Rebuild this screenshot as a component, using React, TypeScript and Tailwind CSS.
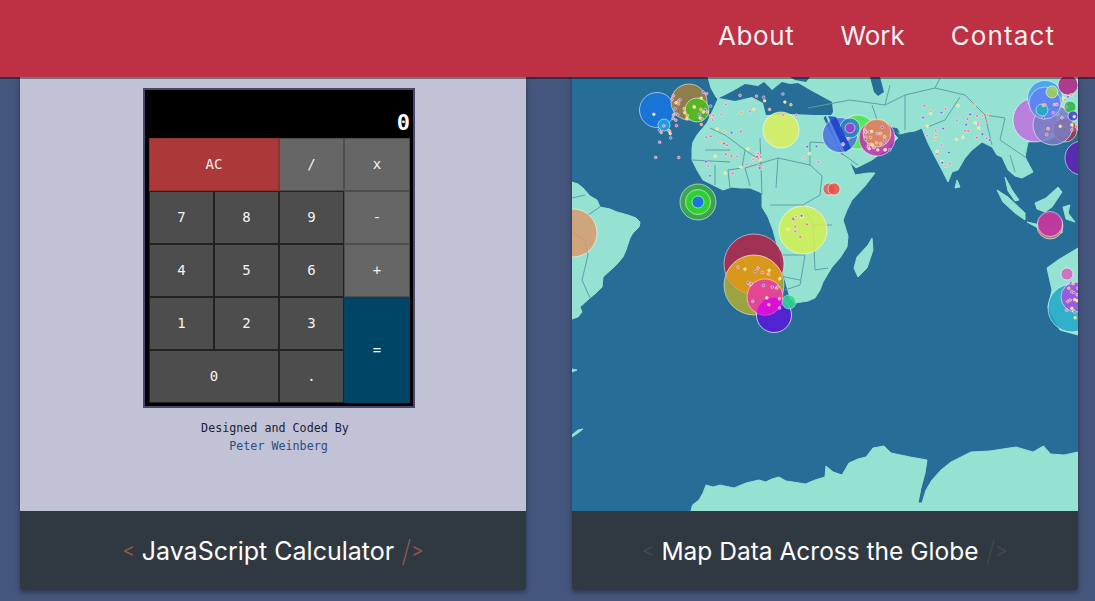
import React, { FC } from 'react';

const LAND = '#95e2d2';
const SEA = '#266d98';
const LINE = '#5f9fa8';

type Spot = [number, number, number, string];

// bubbles below the clip group, roughly west to east
const spots: Spot[] = [
  [573, 233, 24, '#d99a6c'],
  [657, 110, 17.5, '#1676e0'],
  [689, 102, 18, '#a47f3e'],
  [697, 110, 12, '#4cc01c'],
  [664, 125, 6, '#1ea4e4'],
  [781, 130, 18, '#dcee5c'],
  [698, 202, 18, '#3fb23f'],
  [698, 202, 12.5, '#2ed82e'],
  [698, 202, 6, '#1668f2'],
  [803, 230, 24, '#d2ee50'],
  [858, 132, 17, '#4ee64e'],
  [840, 135, 17.5, '#4a6ee4'],
  [850, 128, 10, '#2a7fbe'],
  [850, 128, 5, '#a63cd2'],
  [877, 138, 18, '#c22eae'],
  [877, 133, 14, '#dc9058'],
  [829, 189, 6, '#e05a50'],
  [834, 189, 6, '#ea4f44'],
  [1035, 120, 22, '#c06ee0'],
  [1065, 130, 12, '#a03c50'],
  [1053, 125, 20, '#7a7cc4'],
  [1045, 98, 17.5, '#3e9ef2'],
  [1045, 103, 16, '#6080f2'],
  [1052, 92, 6, '#a2d25c'],
  [1042, 110, 6, '#1eb0c0'],
  [1070, 107, 6, '#2eb43e'],
  [1073, 116, 5, '#3e3ec4'],
  [1068, 85, 10, '#b01e80'],
  [1082, 158, 17, '#6420b4'],
  [1050, 226, 13, '#c08060'],
  [1050, 224, 12.5, '#c02ea4'],
  [1067, 274, 6, '#d860c0'],
  [1072, 308, 24, '#1ea8c8'],
  [1076, 297, 15, '#a650e2'],
];

// small specks: [centre x, centre y, spread x, spread y, how many]
const clusters: [number, number, number, number, number][] = [
  [730, 130, 30, 30, 26],
  [690, 105, 18, 18, 26],
  [665, 135, 14, 25, 12],
  [735, 165, 30, 12, 16],
  [770, 105, 30, 12, 12],
  [955, 125, 35, 20, 34],
  [945, 160, 8, 18, 8],
  [877, 138, 14, 12, 26],
  [800, 230, 14, 16, 10],
  [758, 290, 22, 24, 20],
  [1060, 110, 18, 25, 20],
  [1072, 300, 6, 18, 16],
  [825, 150, 25, 15, 8],
];

const speckColors = ['#f06a8c', '#f2e25c', '#7a6ae0', '#e878c8', '#f0a060'];

const specks = clusters.flatMap(([cx, cy, sx, sy, n], i) =>
  Array.from({ length: n }, (_, k) => {
    const a = Math.sin((i + 1) * 91.7 + k * 12.9898) * 43758.5453;
    const b = Math.sin((i + 1) * 37.3 + k * 78.233) * 24634.6345;
    return {
      x: cx + ((a - Math.floor(a)) * 2 - 1) * sx,
      y: cy + ((b - Math.floor(b)) * 2 - 1) * sy,
      fill: speckColors[(i + k) % speckColors.length],
    };
  }),
);

const WorldMap: FC = () => (
  <svg viewBox="572 77 506 434" className="block h-full w-full blur-[0.35px]" style={{ background: SEA }}>
    <defs>
      <clipPath id="maroon">
        <circle cx={754} cy={264} r={30} />
      </clipPath>
      <clipPath id="pinkdisc">
        <circle cx={765} cy={297} r={18} />
      </clipPath>
    </defs>
    <g fill={LAND} stroke={LAND} strokeWidth={1} strokeLinejoin="round">
      {/* south america */}
      <path d="M572 182 L578 184 L583 188 L590 196 L597 200 L600 207 L610 209 L617 212 L628 215 L636 218 L640 222 L639 227 L633 233 L630 238 L626 250 L623 257 L618 263 L613 268 L603 277 L602 287 L596 293 L590 298 L580 307 L582 312 L578 317 L572 319 Z" />
      {/* africa and eurasia */}
      <path d="M708 77 L711 88 L716 97 L718 99 L713 110 L707 123 L701 130 L697 135 L693 142 L692 148 L692 160 L697 170 L703 180 L713 185 L723 190 L732 187 L740 188 L750 188 L762 193 L762 207 L768 217 L773 230 L777 245 L780 257 L783 273 L787 287 L790 298 L795 303 L808 301 L815 298 L820 290 L823 282 L832 267 L840 258 L847 247 L848 236 L843 220 L847 210 L852 200 L865 186 L875 173 L868 173 L855 175 L850 163 L840 153 L831 134 L823 118 L826 115 L836 141 L845 158 L856 168 L872 160 L885 150 L898 138 L892 132 L880 123 L888 125 L900 134 L908 132 L915 131 L922 128 L925 136 L928 143 L935 157 L942 170 L948 182 L952 172 L958 170 L965 158 L972 150 L982 142 L992 147 L997 155 L1002 157 L1008 170 L1015 176 L1022 178 L1033 172 L1025 157 L1028 142 L1048 140 L1060 135 L1078 130 L1078 77 Z" />
      {/* madagascar */}
      <path d="M872 238 L873 250 L867 268 L858 277 L854 268 L857 257 L868 245 Z" />
      <path d="M957 180 L960 187 L955 188 Z" />
      {/* malay peninsula, sumatra, java */}
      <path d="M1005 177 L1012 190 L1019 200 L1015 201 L1008 191 Z" />
      <path d="M997 190 L1008 197 L1025 213 L1025 220 L1015 213 L1003 202 Z" />
      <path d="M1027 222 L1045 226 L1062 230 L1062 233 L1040 229 Z" />
      <path d="M1035 203 L1046 198 L1058 187 L1062 192 L1052 207 L1045 212 L1037 209 Z" />
      <path d="M1063 207 L1070 205 L1068 213 L1075 222 L1066 219 Z" />
      {/* australia */}
      <path d="M1078 248 L1058 260 L1047 268 L1052 290 L1048 307 L1060 330 L1078 335 Z" />
      {/* antarctica */}
      <path d="M691 511 L692.5 505 L699 500 L703 493 L706 485 L713 487 L720 485 L734 488 L746 483 L759 480 L765.5 482 L772 479 L779 477 L786 481 L793 482 L805.5 484 L815 480 L825 477 L826 466 L833 472 L842 475 L849 463 L858 459 L866 457 L873 448 L884 446 L891 453 L910 457 L927 460 L925 473 L921 488 L918 503 L922 503 L926 490 L932 480 L941 470 L951 462 L971 452 L990 451 L1016 447 L1033 452 L1043.5 446 L1050.5 454 L1064 455 L1078 452 L1078 511 Z" />
      <path d="M572 435 L578 430 L583 429 L578 433 L572 437 Z" />
      <path d="M572 369 L577 370 L572 372 Z" />
    </g>
    <g fill={SEA}>
      {/* mediterranean, black sea, caspian, gulf */}
      <path d="M719 98 L733 91 L745 84 L758 86 L764 82 L772 90 L782 82 L790 84 L798 83 L810 90 L832 102 L833 112 L831 115 L815 115 L790 114 L766 115 L763 103 L752 97 L735 101 Z" />
      <path d="M790 77 L810 77 L806 82 L795 80 Z" />
      <path d="M870 77 L880 77 L884 92 L878 96 L874 92 Z" />
      <path d="M888 127 L897 128 L900 133 L892 131 Z" />
    </g>
    <g fill="none" stroke={LINE} strokeWidth={1}>
      <path d="M710 128 L725 135 L745 150 L742 168 L728 170 M692 160 L730 162 M760 160 L745 150 M760 138 L762 195 M745 168 L778 158 L810 165 L810 142 L827 143 M778 158 L776 188 M810 165 L822 176 L820 195 L803 205 L770 205 M803 205 L813 225 L832 225 M813 225 L815 270 L828 268 M775 255 L805 255 L800 285 L785 290 M775 275 L800 280 M827 143 L858 165 M715 165 L715 185 M728 170 L730 188 M745 168 L750 186 M705 150 L730 150" />
      <path d="M808 108 L850 100 L885 105 L905 95 L905 130 M860 118 L880 128 L872 105 M905 95 L935 88 L965 95 L985 115 L1005 118 L1000 140 M960 97 L945 120 L925 128 M985 115 L992 145 M1010 155 L1015 172 M1000 140 L1025 157 M885 105 L890 85 M935 88 L940 78" />
      <path d="M572 232 L585 240 L588 255 L582 280 L590 298 M600 207 L588 215 M572 198 L585 195" />
    </g>
    {spots.map(([x, y, r, fill], i) => (
      <circle key={i} cx={x} cy={y} r={r} fill={fill} fillOpacity={0.85} stroke="#ffffff" strokeOpacity={0.55} strokeWidth={1} />
    ))}
    <path d="M828 116 L836 117 L851 148 L845 152 Z" fill="#1438c8" fillOpacity={0.8} />
    <circle cx={754} cy={285} r={30} fill="#a8aa36" fillOpacity={0.9} stroke="#fff" strokeOpacity={0.5} />
    <circle cx={754} cy={264} r={30} fill="#ac2c50" fillOpacity={0.92} stroke="#fff" strokeOpacity={0.5} />
    <circle cx={754} cy={285} r={30} fill="#d8981c" clipPath="url(#maroon)" stroke="#fff" strokeOpacity={0.6} />
    <circle cx={774} cy={315} r={17.5} fill="#5420d4" fillOpacity={0.95} stroke="#fff" strokeOpacity={0.7} />
    <circle cx={765} cy={297} r={18} fill="#e83ea0" fillOpacity={0.9} stroke="#fff" strokeOpacity={0.5} />
    <circle cx={774} cy={315} r={17.5} fill="#d810d8" clipPath="url(#pinkdisc)" />
    <circle cx={789} cy={302} r={7} fill="#2ed890" fillOpacity={0.85} stroke="#fff" strokeOpacity={0.4} />
    {specks.map((s, i) => (
      <circle key={i} cx={s.x} cy={s.y} r={1.4} fill={s.fill} stroke="#ffffff" strokeOpacity={0.75} strokeWidth={0.6} />
    ))}
  </svg>
);

type Key = { label: string; cls: string };

const keys: Key[] = [
  { label: 'AC', cls: 'col-span-2 bg-[#ac3939] border-[#8f2f2f]' },
  { label: '/', cls: 'bg-[#666666] border-[#4d4d4d]' },
  { label: 'x', cls: 'bg-[#666666] border-[#4d4d4d]' },
  { label: '7', cls: 'bg-[#4d4d4d] border-[#222]' },
  { label: '8', cls: 'bg-[#4d4d4d] border-[#222]' },
  { label: '9', cls: 'bg-[#4d4d4d] border-[#222]' },
  { label: '-', cls: 'bg-[#666666] border-[#4d4d4d]' },
  { label: '4', cls: 'bg-[#4d4d4d] border-[#222]' },
  { label: '5', cls: 'bg-[#4d4d4d] border-[#222]' },
  { label: '6', cls: 'bg-[#4d4d4d] border-[#222]' },
  { label: '+', cls: 'bg-[#666666] border-[#4d4d4d]' },
  { label: '1', cls: 'bg-[#4d4d4d] border-[#222]' },
  { label: '2', cls: 'bg-[#4d4d4d] border-[#222]' },
  { label: '3', cls: 'bg-[#4d4d4d] border-[#222]' },
  { label: '=', cls: 'row-span-2 bg-[#004466] border-[#004466]' },
  { label: '0', cls: 'col-span-2 bg-[#4d4d4d] border-[#222]' },
  { label: '.', cls: 'bg-[#4d4d4d] border-[#222]' },
];

const Calculator: FC = () => (
  <div className="flex h-full flex-col items-center bg-[#c2c2d6] pt-[11px] font-['DejaVu_Sans_Mono',monospace]">
    <div className="ml-[12px] h-[320px] w-[272px] border-2 border-[#47476b] bg-black px-1 pb-[3px]">
      <div className="flex h-[48px] items-end justify-end text-[22px] leading-[30px] font-bold text-white">
        <span className="-mr-[1px]">0</span>
      </div>
      <div className="grid h-[265px] grid-cols-[65px_65px_65px_66px] grid-rows-[53px_53px_53px_53px_53px]">
        {keys.map((k) => (
          <div
            key={k.label}
            className={`flex items-center justify-center border text-[14px] text-[#f4f4f4] ${k.cls}`}
          >
            {k.label}
          </div>
        ))}
      </div>
    </div>
    <div className="mt-[11px] ml-[4px] text-center text-[11.7px] leading-[18px] text-[#1c2230]">
      <div>Designed and Coded By</div>
      <div className="pl-[7px] text-[#2b4e7e]">Peter Weinberg</div>
    </div>
  </div>
);

const Title: FC<{ name: string; bracket: string; size: string }> = ({ name, bracket, size }) => (
  <div className="flex h-[79px] items-center justify-center rounded-b-[2px] bg-[#303841] pt-[1px] font-['Inter',sans-serif] text-white">
    <span className={`mr-[7px] text-[19px] ${bracket}`}>&lt;</span>
    <span className={`${size} leading-none`}>{name}</span>
    <span className={`ml-[7px] text-[30px] leading-none font-extralight ${bracket}`}>/</span>
    <span className={`text-[19px] ${bracket}`}>&gt;</span>
  </div>
);

export default function App() {
  return (
    <div className="flex h-[601px] w-[1095px] flex-col overflow-hidden bg-[#45567d]">
      <header className="relative z-10 flex h-[77px] shrink-0 items-center justify-end gap-[46px] bg-[#be3144] pr-[40px] pb-[7px] font-['Inter',sans-serif] text-[26px] text-[#f0f0f0] shadow-[0_2px_0_rgba(0,0,0,0.4)]">
        <a className="tracking-[0.6px]">About</a>
        <a className="tracking-[0px]">Work</a>
        <a className="tracking-[1.1px]">Contact</a>
      </header>
      <main className="grid grid-cols-[506px_506px] gap-x-[46px] pl-[20px]">
        <div className="flex h-[513px] flex-col shadow-[0_2px_5px_rgba(0,0,0,0.4)]">
          <div className="h-[434px]">
            <Calculator />
          </div>
          <Title name="JavaScript Calculator" bracket="text-[#8f5a4c]" size="text-[25px]" />
        </div>
        <div className="flex h-[513px] flex-col shadow-[0_2px_5px_rgba(0,0,0,0.4)]">
          <div className="h-[434px]">
            <WorldMap />
          </div>
          <Title name="Map Data Across the Globe" bracket="text-[#46474c]" size="text-[24.5px]" />
        </div>
      </main>
    </div>
  );
}
